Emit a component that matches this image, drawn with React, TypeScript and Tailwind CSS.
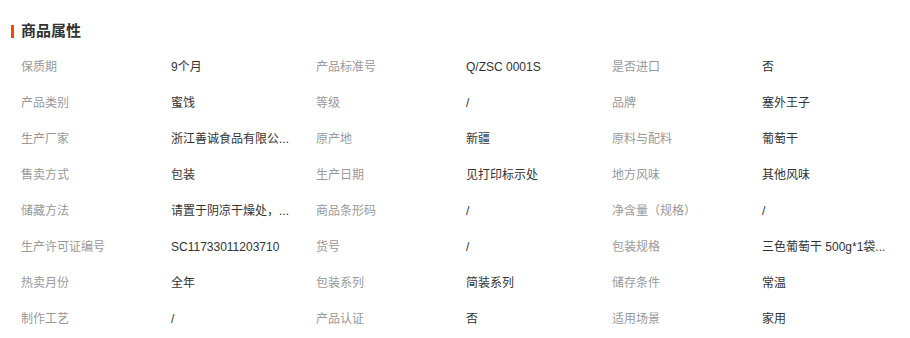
const rows: [string, string][][] = [
  [["保质期", "9个月"], ["产品标准号", "Q/ZSC 0001S"], ["是否进口", "否"]],
  [["产品类别", "蜜饯"], ["等级", "/"], ["品牌", "塞外王子"]],
  [["生产厂家", "浙江善诚食品有限公..."], ["原产地", "新疆"], ["原料与配料", "葡萄干"]],
  [["售卖方式", "包装"], ["生产日期", "见打印标示处"], ["地方风味", "其他风味"]],
  [["储藏方法", "请置于阴凉干燥处，..."], ["商品条形码", "/"], ["净含量（规格）", "/"]],
  [["生产许可证编号", "SC11733011203710"], ["货号", "/"], ["包装规格", "三色葡萄干 500g*1袋..."]],
  [["热卖月份", "全年"], ["包装系列", "简装系列"], ["储存条件", "常温"]],
  [["制作工艺", "/"], ["产品认证", "否"], ["适用场景", "家用"]],
];

const font = { fontFamily: '"Liberation Sans", "Noto Sans CJK SC", sans-serif' };

const App = () => {
  return (
    <div className="w-[910px] h-[338px] bg-white overflow-hidden" style={font}>
      <div className="flex items-center h-[20px] mt-[21px] pl-[11px]">
        <span className="w-[3px] h-[13px] bg-[#ff4400]" />
        <h2 className="ml-[7px] text-[15px] font-bold text-[#333]">商品属性</h2>
      </div>

      <div className="mt-[8px] pl-[21px] grid grid-cols-[150px_145px_150px_146px_150px_1fr]">
        {rows.map((row, i) =>
          row.map(([label, value], j) => (
            <div key={`${i}-${j}`} className="contents">
              <div className="h-[36px] flex items-center text-[12px] text-[#999]">
                {label}
              </div>
              <div className="h-[36px] flex items-center text-[12px] text-[#333] whitespace-nowrap">
                {value}
              </div>
            </div>
          ))
        )}
      </div>
    </div>
  );
};

export default App;
